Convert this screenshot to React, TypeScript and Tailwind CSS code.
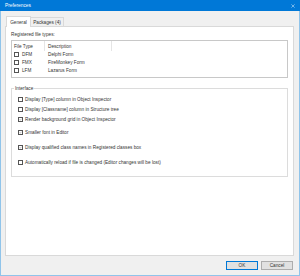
import React from "react";

const fileTypes = [
    { ext: "DFM", desc: "Delphi Form" },
    { ext: "FMX", desc: "FireMonkey Form" },
    { ext: "LFM", desc: "Lazarus Form" },
];

const options = [
    { label: "Display [Type] column in Object Inspector", checked: false, gap: "mt-[5px]" },
    { label: "Display [Classname] column in Structure tree", checked: false, gap: "mt-[5px]" },
    { label: "Render background grid in Object Inspector", checked: true, gap: "mt-[5px]" },
    { label: "Smaller font in Editor", checked: true, gap: "mt-[8px]" },
    { label: "Display qualified class names in Registered classes box", checked: true, gap: "mt-[10px]" },
    { label: "Automatically reload if file is changed (Editor changes will be lost)", checked: false, gap: "mt-[10px]" },
];

const Box = ({ checked }: { checked: boolean }) => (
    <span className="w-[5px] h-[5px] border-[0.6px] border-[#555] bg-white flex items-center justify-center shrink-0">
        {checked && (
            <svg width="5" height="5" viewBox="0 0 10 10">
                <path d="M2 5.2 L4.2 7.4 L8.2 2.6" fill="none" stroke="#333" strokeWidth="1.1" />
            </svg>
        )}
    </span>
);

export default function App() {
    return (
        <div className="w-[300px] h-[276px] flex flex-col bg-[#f0f0f0] border border-t-0 border-[#90c4ea] font-['Liberation_Sans',sans-serif] text-[4.7px] leading-[5px] text-[#333]">
            {/* title bar */}
            <div className="h-[11px] -mx-px bg-[#0078d7] flex items-center justify-between pl-[5px] pr-[5px] text-white text-[4.8px]">
                <span>Preferences</span>
                <svg width="4" height="4" viewBox="0 0 10 10">
                    <path d="M1 1 L9 9 M9 1 L1 9" stroke="#cfe6fa" strokeWidth="1.4" />
                </svg>
            </div>

            <div className="flex-1 flex flex-col pl-[4px] pr-[5px] pt-[4px]">
                {/* tabs */}
                <div className="flex items-end h-[11px] pl-[1px]">
                    <div className="h-[11px] w-[25px] bg-white border border-b-0 border-[#d9d9d9] flex items-center justify-center relative z-10 -mb-px">
                        General
                    </div>
                    <div className="h-[9px] w-[33px] border border-l-0 border-b-0 border-[#d9d9d9] flex items-center justify-center">
                        Packages (4)
                    </div>
                </div>

                {/* tab sheet */}
                <div className="h-[230px] bg-white border border-[#d9d9d9] pl-[5px] pr-[5px] pt-[5px]">
                    <div>Registered file types:</div>
                    <div className="mt-[3px] h-[38px] border border-[#c8c8c8] bg-white">
                        <div className="flex h-[10px] items-center">
                            <div className="w-[33px] h-full pl-[2px] flex items-center border-r border-[#e5e5e5]">File Type</div>
                            <div className="w-[67px] h-full pl-[3px] flex items-center border-r border-[#e5e5e5]">Description</div>
                        </div>
                        {fileTypes.map((f) => (
                            <div key={f.ext} className="flex h-[7.7px] items-center">
                                <div className="w-[33px] pl-[2px] flex items-center gap-[3px]">
                                    <Box checked={false} />
                                    <span>{f.ext}</span>
                                </div>
                                <div className="pl-[3px]">{f.desc}</div>
                            </div>
                        ))}
                    </div>

                    {/* Interface group */}
                    <div className="mt-[10px] h-[89px] border border-[#dcdcdc] relative px-[6px] pt-[3px]">
                        <span className="absolute -top-[3px] left-[2px] bg-white px-[1px]">Interface</span>
                        {options.map((o) => (
                            <div key={o.label} className={`flex items-center gap-[2px] ${o.gap}`}>
                                <Box checked={o.checked} />
                                <span>{o.label}</span>
                            </div>
                        ))}
                    </div>
                </div>

                {/* buttons */}
                <div className="flex justify-end gap-[3px] mt-[5px] pr-[1px]">
                    <button className="w-[32px] h-[9px] bg-[#e1e1e1] border border-[#0078d7] flex items-center justify-center">
                        OK
                    </button>
                    <button className="w-[32px] h-[9px] bg-[#e1e1e1] border border-[#adadad] flex items-center justify-center">
                        Cancel
                    </button>
                </div>
            </div>
        </div>
    );
}
